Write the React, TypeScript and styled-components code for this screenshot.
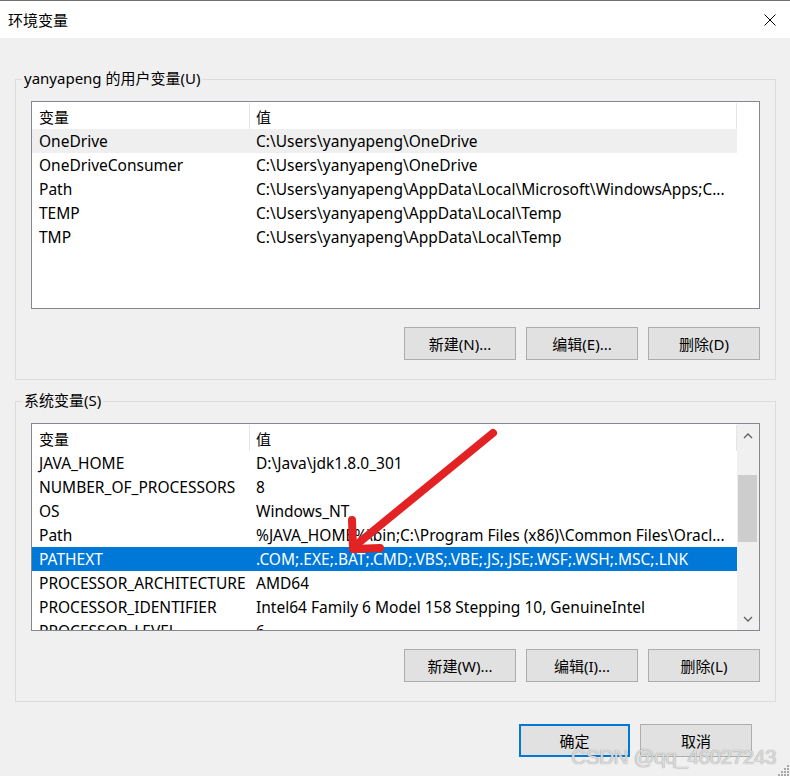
import React from "react";
import styled, { createGlobalStyle } from "styled-components";

interface Variable {
	name: string;
	value: string;
}

const userVars: Variable[] = [
	{ name: "OneDrive", value: "C:\\Users\\yanyapeng\\OneDrive" },
	{ name: "OneDriveConsumer", value: "C:\\Users\\yanyapeng\\OneDrive" },
	{ name: "Path", value: "C:\\Users\\yanyapeng\\AppData\\Local\\Microsoft\\WindowsApps;C..." },
	{ name: "TEMP", value: "C:\\Users\\yanyapeng\\AppData\\Local\\Temp" },
	{ name: "TMP", value: "C:\\Users\\yanyapeng\\AppData\\Local\\Temp" },
];

const systemVars: Variable[] = [
	{ name: "JAVA_HOME", value: "D:\\Java\\jdk1.8.0_301" },
	{ name: "NUMBER_OF_PROCESSORS", value: "8" },
	{ name: "OS", value: "Windows_NT" },
	{ name: "Path", value: "%JAVA_HOME%\\bin;C:\\Program Files (x86)\\Common Files\\Oracl..." },
	{ name: "PATHEXT", value: ".COM;.EXE;.BAT;.CMD;.VBS;.VBE;.JS;.JSE;.WSF;.WSH;.MSC;.LNK" },
	{ name: "PROCESSOR_ARCHITECTURE", value: "AMD64" },
	{ name: "PROCESSOR_IDENTIFIER", value: "Intel64 Family 6 Model 158 Stepping 10, GenuineIntel" },
	{ name: "PROCESSOR_LEVEL", value: "6" },
];

const GlobalStyle = createGlobalStyle`
	html, body {
		margin: 0;
		padding: 0;
		background: #f0f0f0;
	}
	* {
		box-sizing: border-box;
	}
`;

const Window = styled.div`
	position: relative;
	width: 790px;
	height: 776px;
	display: flex;
	flex-direction: column;
	background: #f0f0f0;
	border-top: 1px solid #707070;
	overflow: hidden;
	font-family: "Segoe UI", "Noto Sans", "Noto Sans CJK SC", sans-serif;
	color: #000;
`;

const TitleBar = styled.div`
	height: 37px;
	flex-shrink: 0;
	display: flex;
	align-items: center;
	justify-content: space-between;
	padding: 0 14px 0 8px;
	background: #fff;
	font-size: 15px;
`;

const Body = styled.div`
	display: flex;
	flex-direction: column;
	padding: 41px 14px 0 15px;
`;

const GroupBox = styled.div<{ $gap?: number }>`
	display: flex;
	flex-direction: column;
	margin-top: ${(p) => p.$gap ?? 0}px;
	padding: 0 15px 19px;
	border: 1px solid #dcdcdc;
`;

const Legend = styled.div`
	align-self: flex-start;
	height: 20px;
	line-height: 20px;
	margin: -12px 0 0 -9px;
	padding: 0 2px;
	background: #f0f0f0;
	font-size: 15px;
	white-space: nowrap;
`;

const ListBox = styled.div`
	display: flex;
	height: 208px;
	margin-top: 13px;
	border: 1px solid #828790;
	background: #fff;
`;

const ListMain = styled.div`
	width: 705px;
	display: flex;
	flex-direction: column;
	overflow: hidden;
`;

const HeaderRow = styled.div`
	display: flex;
	height: 27px;
	flex-shrink: 0;
	font-size: 15px;
`;

const HeaderCell = styled.div<{ $width?: number }>`
	display: flex;
	align-items: center;
	width: ${(p) => (p.$width ? `${p.$width}px` : "auto")};
	flex: ${(p) => (p.$width ? "none" : "1")};
	padding-left: ${(p) => (p.$width ? 7 : 6)}px;
	border-right: 1px solid #e5e5e5;
	margin: 1px 0 0;
`;

const Row = styled.div<{ $state?: "hover" | "selected" }>`
	display: flex;
	align-items: center;
	height: 24px;
	flex-shrink: 0;
	font-size: 15.5px;
	white-space: nowrap;
	background: ${(p) =>
		p.$state === "selected" ? "#0078d7" : p.$state === "hover" ? "#efefef" : "transparent"};
	color: ${(p) => (p.$state === "selected" ? "#fff" : "#000")};
`;

const NameCell = styled.div`
	width: 218px;
	flex: none;
	padding-left: 7px;
	overflow: hidden;
`;

const ValueCell = styled.div`
	flex: 1;
	padding-left: 6px;
	overflow: hidden;
`;

const ScrollBar = styled.div`
	width: 22px;
	display: flex;
	flex-direction: column;
	background: #f0f0f0;
`;

const ScrollArrow = styled.div`
	height: 23px;
	display: flex;
	align-items: center;
	justify-content: center;
	padding-right: 1px;
`;

const ScrollTrack = styled.div`
	flex: 1;
	padding: 28px 2px 0 1px;
`;

const ScrollThumb = styled.div`
	height: 67px;
	background: #cdcdcd;
`;

const ButtonRow = styled.div<{ $gap?: number; $right?: number }>`
	display: flex;
	justify-content: flex-end;
	gap: 10px;
	margin-top: ${(p) => p.$gap ?? 18}px;
	padding-right: ${(p) => p.$right ?? 0}px;
`;

const Button = styled.button<{ $primary?: boolean }>`
	width: ${(p) => (p.$primary ? 111 : 112)}px;
	height: 33px;
	padding: 0;
	background: #e1e1e1;
	border: ${(p) => (p.$primary ? "2px solid #0078d7" : "1px solid #adadad")};
	font-family: inherit;
	font-size: 15px;
	color: #000;
`;

const Watermark = styled.div`
	position: absolute;
	right: 14px;
	bottom: 9px;
	font-family: "Liberation Sans", Arial, sans-serif;
	font-size: 21px;
	line-height: 1;
	letter-spacing: -0.6px;
	color: rgba(228, 228, 228, 0.92);
	text-shadow: 0 0 1px #7c7c7c;
	pointer-events: none;
`;

const Overlay = styled.svg`
	position: absolute;
	left: 340px;
	top: 420px;
	pointer-events: none;
`;

const Grip = styled.svg`
	position: absolute;
	right: 0;
	bottom: 0;
`;

const Chevron = ({ up }: { up?: boolean }) => (
	<svg width="10" height="6" viewBox="0 0 10 6">
		<polyline
			points={up ? "1,5 5,1 9,5" : "1,1 5,5 9,1"}
			fill="none"
			stroke="#606060"
			strokeWidth="1.3"
		/>
	</svg>
);

const VarList = ({
	rows,
	scroll,
	hover,
	selected,
}: {
	rows: Variable[];
	scroll?: boolean;
	hover?: number;
	selected?: number;
}) => (
	<ListBox>
		<ListMain>
			<HeaderRow>
				<HeaderCell $width={218}>变量</HeaderCell>
				<HeaderCell>值</HeaderCell>
			</HeaderRow>
			{rows.map((r, i) => (
				<Row key={r.name} $state={i === selected ? "selected" : i === hover ? "hover" : undefined}>
					<NameCell>{r.name}</NameCell>
					<ValueCell>{r.value}</ValueCell>
				</Row>
			))}
		</ListMain>
		{scroll && (
			<ScrollBar>
				<ScrollArrow>
					<Chevron up />
				</ScrollArrow>
				<ScrollTrack>
					<ScrollThumb />
				</ScrollTrack>
				<ScrollArrow>
					<Chevron />
				</ScrollArrow>
			</ScrollBar>
		)}
	</ListBox>
);

const App = () => {
	return (
		<>
			<GlobalStyle />
			<Window>
				<TitleBar>
					<span>环境变量</span>
					<svg width="12" height="12" viewBox="0 0 12 12">
						<path d="M0.5 0.5 L11.5 11.5 M11.5 0.5 L0.5 11.5" stroke="#000" strokeWidth="1" />
					</svg>
				</TitleBar>
				<Body>
					<GroupBox>
						<Legend>yanyapeng 的用户变量(U)</Legend>
						<VarList rows={userVars} hover={0} />
						<ButtonRow>
							<Button>新建(N)...</Button>
							<Button>编辑(E)...</Button>
							<Button>删除(D)</Button>
						</ButtonRow>
					</GroupBox>
					<GroupBox $gap={21}>
						<Legend>系统变量(S)</Legend>
						<VarList rows={systemVars} scroll selected={4} />
						<ButtonRow>
							<Button>新建(W)...</Button>
							<Button>编辑(I)...</Button>
							<Button>删除(L)</Button>
						</ButtonRow>
					</GroupBox>
					<ButtonRow $gap={22} $right={24}>
						<Button $primary>确定</Button>
						<Button>取消</Button>
					</ButtonRow>
				</Body>
				<Overlay width="170" height="140" viewBox="0 0 170 140">
					<g fill="none" stroke="#e32224" strokeWidth="8" strokeLinecap="round" strokeLinejoin="round">
						<line x1="153" y1="12" x2="16" y2="124" />
						<polyline points="12,99 13,128 40,127" />
					</g>
				</Overlay>
				<Watermark>CSDN @qq_46027243</Watermark>
				<Grip width="13" height="13" viewBox="0 0 13 13">
					<g fill="#a8a8a8">
						<rect x="10" y="2" width="2" height="2" />
						<rect x="7" y="5" width="2" height="2" />
						<rect x="10" y="5" width="2" height="2" />
						<rect x="4" y="8" width="2" height="2" />
						<rect x="7" y="8" width="2" height="2" />
						<rect x="10" y="8" width="2" height="2" />
						<rect x="1" y="11" width="2" height="2" />
						<rect x="4" y="11" width="2" height="2" />
						<rect x="7" y="11" width="2" height="2" />
						<rect x="10" y="11" width="2" height="2" />
					</g>
				</Grip>
			</Window>
		</>
	);
};

export default App;
